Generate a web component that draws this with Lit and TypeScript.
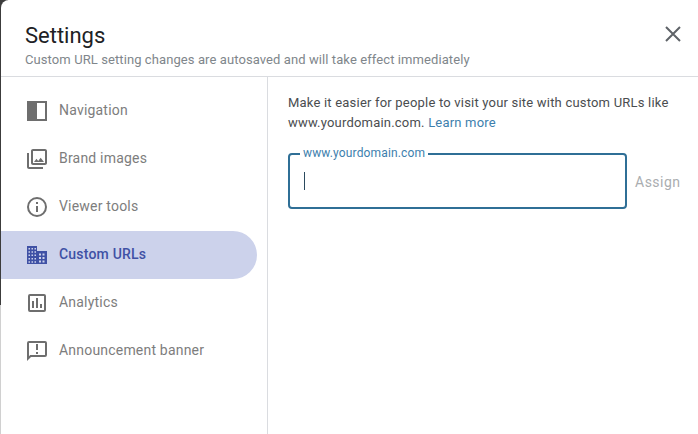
import { LitElement, html, css, svg } from "lit";
import { customElement } from "lit/decorators.js";

// little square holes for the building icon
const holes = (xs: number[], ys: number[], size: number) =>
  xs
    .flatMap((x) => ys.map((y) => `M${x} ${y}h${size}v${size}h-${size}z`))
    .join("");

const domainPath =
  "M2 3h10v5h10v13H2z" +
  holes([3.5, 6.5, 9.5], [5, 8.3, 11.6, 14.9, 18.2], 1.5) +
  holes([14, 17.5], [10.5, 14, 17.5], 2);

// material style icons, 24 viewBox
const icons = {
  navigation: svg`<path fill-rule="evenodd" d="M2 2h20v20H2zM12 4v16h8V4z"/>`,
  images: svg`<path d="M20 4v12H8V4h12m0-2H8c-1.1 0-2 .9-2 2v12c0 1.1.9 2 2 2h12c1.1 0 2-.9 2-2V4c0-1.1-.9-2-2-2zm-8.5 9.67l1.69 2.26 2.48-3.1L19 15H9zM2 6v14c0 1.1.9 2 2 2h14v-2H4V6H2z"/>`,
  info: svg`<path d="M11 7h2v2h-2zm0 4h2v6h-2zm1-9a10 10 0 1 0 0 20 10 10 0 0 0 0-20zm0 18a8 8 0 1 1 0-16 8 8 0 0 1 0 16z"/>`,
  domain: svg`<path fill-rule="evenodd" d="${domainPath}"/>`,
  analytics: svg`<path d="M19 3H5a2 2 0 0 0-2 2v14a2 2 0 0 0 2 2h14a2 2 0 0 0 2-2V5a2 2 0 0 0-2-2zm0 16H5V5h14v14zM7 10h2v7H7zm4-3h2v10h-2zm4 6h2v4h-2z"/>`,
  announcement: svg`<path d="M20 2H4a2 2 0 0 0-2 2v18l4-4h14a2 2 0 0 0 2-2V4a2 2 0 0 0-2-2zm0 14H5.2L4 17.2V4h16v12zM11 5h2v6h-2zm0 8h2v2h-2z"/>`,
};

const navItems = [
  { label: "Navigation", icon: icons.navigation },
  { label: "Brand images", icon: icons.images },
  { label: "Viewer tools", icon: icons.info },
  { label: "Custom URLs", icon: icons.domain, active: true },
  { label: "Analytics", icon: icons.analytics },
  { label: "Announcement banner", icon: icons.announcement },
];

@customElement("app-root")
export class AppRoot extends LitElement {
  static styles = css`
    :host {
      display: block;
      width: 698px;
      height: 434px;
      overflow: hidden;
      position: relative;
      background: #d0d0d0;
      font-family: Roboto, "Liberation Sans", sans-serif;
    }

    /* page behind the dialog, only a sliver shows on the left */
    .backdrop {
      position: absolute;
      left: 0;
      top: 0;
      width: 8px;
      height: 305px;
      background: #3c3c3c;
    }

    .dialog {
      position: absolute;
      inset: 0 0 0 1px;
      background: #fff;
      border-top-left-radius: 8px;
      display: flex;
      flex-direction: column;
    }

    .header {
      height: 77px;
      flex: none;
      box-sizing: border-box;
      border-bottom: 1px solid #dadce0;
      padding: 22px 0 0 24px;
      position: relative;
    }

    h1 {
      margin: 0;
      font-size: 22px;
      font-weight: 400;
      line-height: 28px;
      color: #202124;
    }

    .subtitle {
      font-size: 13px;
      line-height: 20px;
      letter-spacing: 0.09px;
      color: #80868b;
    }

    .close {
      position: absolute;
      top: 26px;
      right: 17px;
      width: 16px;
      height: 16px;
      display: block;
    }

    .body {
      flex: 1;
      display: flex;
    }

    nav {
      width: 267px;
      flex: none;
      box-sizing: border-box;
      border-right: 1px solid #dadce0;
      padding: 10px 10px 0 0;
    }

    .item {
      height: 48px;
      display: flex;
      align-items: center;
      padding-left: 24px;
      gap: 10px;
      font-size: 14px;
      letter-spacing: 0.2px;
      color: #7d7d7d;
      border-radius: 0 24px 24px 0;
    }

    .item span {
      padding-bottom: 2px;
    }

    .item svg {
      width: 24px;
      height: 24px;
      fill: #6e6e6e;
      flex: none;
    }

    .item.active {
      background: #ccd2eb;
      color: #3f51a5;
      font-weight: 500;
    }

    .item.active svg {
      fill: #3f51a5;
    }

    .content {
      flex: 1;
      padding: 16px 20px 0 20px;
    }

    .intro {
      margin: 0;
      font-size: 13px;
      line-height: 20px;
      letter-spacing: 0.2px;
      color: #4a4d50;
    }

    .intro a {
      color: #3d80ad;
      text-decoration: none;
    }

    .row {
      margin-top: 20px;
      display: flex;
      align-items: center;
      gap: 8px;
    }

    .field {
      width: 339px;
      height: 56px;
      box-sizing: border-box;
      border: 2px solid #2f6f96;
      border-radius: 4px;
      position: relative;
      flex: none;
    }

    .field label {
      position: absolute;
      left: 10px;
      top: -9px;
      padding: 0 3px;
      background: #fff;
      font-size: 12px;
      line-height: 14px;
      letter-spacing: 0.15px;
      color: #3d80ad;
    }

    .caret {
      position: absolute;
      left: 14px;
      top: 17px;
      width: 1px;
      height: 18px;
      background: #2b4a5e;
    }

    .assign {
      padding-top: 2px;
      font-size: 14px;
      letter-spacing: 0.5px;
      color: #aaadb0;
    }
  `;

  render() {
    return html`
      <div class="backdrop"></div>
      <div class="dialog">
        <header class="header">
          <h1>Settings</h1>
          <div class="subtitle">
            Custom URL setting changes are autosaved and will take effect immediately
          </div>
          <svg class="close" viewBox="0 0 16 16" fill="none" stroke="#5f6368" stroke-width="2">
            <path d="M1 1l14 14M15 1L1 15" />
          </svg>
        </header>
        <div class="body">
          <nav>
            ${navItems.map(
              (item) => html`
                <div class="item ${item.active ? "active" : ""}">
                  <svg viewBox="0 0 24 24">${item.icon}</svg>
                  <span>${item.label}</span>
                </div>
              `
            )}
          </nav>
          <section class="content">
            <p class="intro">
              Make it easier for people to visit your site with custom URLs like
              www.yourdomain.com. <a>Learn more</a>
            </p>
            <div class="row">
              <div class="field">
                <label>www.yourdomain.com</label>
                <div class="caret"></div>
              </div>
              <span class="assign">Assign</span>
            </div>
          </section>
        </div>
      </div>
    `;
  }
}
